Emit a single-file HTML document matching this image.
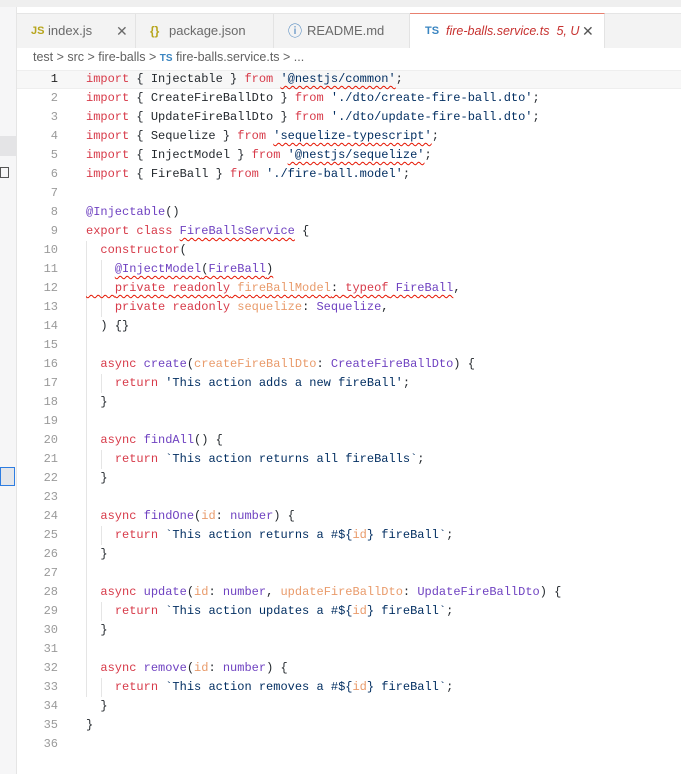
<!DOCTYPE html>
<html><head><meta charset="utf-8"><style>
body{margin:0;width:681px;height:774px;overflow:hidden;background:#fff;font-family:"Liberation Sans",sans-serif;position:relative}
.top{position:absolute;left:0;top:0;width:681px;height:7px;background:#efefef}
.tabbar{position:absolute;left:17px;top:13px;width:664px;height:34px;background:#f3f3f3;border-top:1px solid #e5e5e5}
.tab{position:absolute;top:0;height:34px;background:#f3f3f3;border-right:1px solid #e3e3e3;font-size:13px;color:#6a6a6a;line-height:34px}
.tab.active{background:#fff;border-top:1px solid #e8806f;height:34px;top:-1px}
.side{position:absolute;left:0;top:7px;width:16px;height:767px;background:#f6f6f7;border-right:1px solid #e5e5e5}
.crumb{position:absolute;left:33px;top:50px;font-size:12.5px;color:#616161}
.code{position:absolute;left:0;top:70px;width:681px;font-family:"Liberation Mono",monospace;font-size:12px}
.ln{height:19px;line-height:19px;white-space:pre;position:relative}
.n{position:absolute;left:20px;width:38px;text-align:right;color:#9a9a9a}
.c{position:absolute;left:86px;color:#24292e}
.k{color:#d73a49}.f{color:#6f42c1}.s{color:#032f62}.p{color:#e99b6b}.t{color:#6f42c1}
.sq{text-decoration:underline wavy #e51400;text-decoration-thickness:1px;text-underline-offset:3px}
.g{position:absolute;width:1px;background:#e5e5e5}
</style></head><body>
<div class="top"></div>
<div class="side">
<div style="position:absolute;top:129px;left:0;width:16px;height:20px;background:#e4e4e6"></div>
<div style="position:absolute;top:160px;left:0;width:7px;height:9px;border:1px solid #555;font-size:0"></div>
<div style="position:absolute;top:460px;left:0;width:15px;height:19px;background:#e4e6ea;border:1px solid #2e7de1;box-sizing:border-box"></div>
</div>
<div class="tabbar">
<div class="tab" style="left:0;width:118px"><span style="position:absolute;left:14px;color:#b7a51c;font-size:11px;font-weight:bold">JS</span><span style="position:absolute;left:31px">index.js</span><span style="position:absolute;left:99px;font-size:14px">✕</span></div>
<div class="tab" style="left:119px;width:137px"><span style="position:absolute;left:14px;color:#b7a51c;font-size:12px;font-weight:bold">{}</span><span style="position:absolute;left:33px">package.json</span></div>
<div class="tab" style="left:257px;width:135px"><span style="position:absolute;left:14px;color:#3b7ab8;font-size:14px">ⓘ</span><span style="position:absolute;left:33px">README.md</span></div>
<div class="tab active" style="left:393px;width:194px"><span style="position:absolute;left:15px;color:#3a85c1;font-size:11px;font-weight:bold">TS</span><span style="position:absolute;left:36px;color:#c7312f;font-style:italic;font-size:12.5px">fire-balls.service.ts&nbsp; 5, U</span><span style="position:absolute;left:172px;font-size:14px;color:#555">✕</span></div>
</div>
<div class="crumb">test &gt; src &gt; fire-balls &gt; <b style="color:#3a85c1;font-size:10px">TS</b> fire-balls.service.ts &gt; ...</div>
<div style="position:absolute;left:17px;top:70px;width:664px;height:19px;background:#f7f7f7;border-top:1px solid #eee;border-bottom:1px solid #eee;box-sizing:border-box"></div>
<div class="g" style="left:86px;top:241px;height:456px"></div>
<div class="g" style="left:101px;top:260px;height:57px"></div>
<div class="g" style="left:101px;top:374px;height:19px"></div>
<div class="g" style="left:101px;top:450px;height:19px"></div>
<div class="g" style="left:101px;top:526px;height:19px"></div>
<div class="g" style="left:101px;top:602px;height:19px"></div>
<div class="g" style="left:101px;top:678px;height:19px"></div>
<div class="code">
<div class="ln"><span class="n" style="color:#222">1</span><span class="c"><span class="k">import</span> { Injectable } <span class="k">from</span> <span class="s sq">'@nestjs/common'</span>;</span></div>
<div class="ln"><span class="n">2</span><span class="c"><span class="k">import</span> { CreateFireBallDto } <span class="k">from</span> <span class="s">'./dto/create-fire-ball.dto'</span>;</span></div>
<div class="ln"><span class="n">3</span><span class="c"><span class="k">import</span> { UpdateFireBallDto } <span class="k">from</span> <span class="s">'./dto/update-fire-ball.dto'</span>;</span></div>
<div class="ln"><span class="n">4</span><span class="c"><span class="k">import</span> { Sequelize } <span class="k">from</span> <span class="s sq">'sequelize-typescript'</span>;</span></div>
<div class="ln"><span class="n">5</span><span class="c"><span class="k">import</span> { InjectModel } <span class="k">from</span> <span class="s sq">'@nestjs/sequelize'</span>;</span></div>
<div class="ln"><span class="n">6</span><span class="c"><span class="k">import</span> { FireBall } <span class="k">from</span> <span class="s">'./fire-ball.model'</span>;</span></div>
<div class="ln"><span class="n">7</span></div>
<div class="ln"><span class="n">8</span><span class="c"><span class="f">@Injectable</span>()</span></div>
<div class="ln"><span class="n">9</span><span class="c"><span class="k">export</span> <span class="k">class</span> <span class="t sq">FireBallsService</span> {</span></div>
<div class="ln"><span class="n">10</span><span class="c">  <span class="k">constructor</span>(</span></div>
<div class="ln"><span class="n">11</span><span class="c">    <span class="sq"><span class="f">@InjectModel</span>(<span class="t">FireBall</span>)</span></span></div>
<div class="ln"><span class="n">12</span><span class="c"><span class="sq">    <span class="k">private</span> <span class="k">readonly</span> <span class="p">fireBallModel</span>: <span class="k">typeof</span> <span class="t">FireBall</span></span>,</span></div>
<div class="ln"><span class="n">13</span><span class="c">    <span class="k">private</span> <span class="k">readonly</span> <span class="p">sequelize</span>: <span class="t">Sequelize</span>,</span></div>
<div class="ln"><span class="n">14</span><span class="c">  ) {}</span></div>
<div class="ln"><span class="n">15</span></div>
<div class="ln"><span class="n">16</span><span class="c">  <span class="k">async</span> <span class="f">create</span>(<span class="p">createFireBallDto</span>: <span class="t">CreateFireBallDto</span>) {</span></div>
<div class="ln"><span class="n">17</span><span class="c">    <span class="k">return</span> <span class="s">'This action adds a new fireBall'</span>;</span></div>
<div class="ln"><span class="n">18</span><span class="c">  }</span></div>
<div class="ln"><span class="n">19</span></div>
<div class="ln"><span class="n">20</span><span class="c">  <span class="k">async</span> <span class="f">findAll</span>() {</span></div>
<div class="ln"><span class="n">21</span><span class="c">    <span class="k">return</span> <span class="s">`This action returns all fireBalls`</span>;</span></div>
<div class="ln"><span class="n">22</span><span class="c">  }</span></div>
<div class="ln"><span class="n">23</span></div>
<div class="ln"><span class="n">24</span><span class="c">  <span class="k">async</span> <span class="f">findOne</span>(<span class="p">id</span>: <span class="t">number</span>) {</span></div>
<div class="ln"><span class="n">25</span><span class="c">    <span class="k">return</span> <span class="s">`This action returns a #${</span><span class="p">id</span><span class="s">} fireBall`</span>;</span></div>
<div class="ln"><span class="n">26</span><span class="c">  }</span></div>
<div class="ln"><span class="n">27</span></div>
<div class="ln"><span class="n">28</span><span class="c">  <span class="k">async</span> <span class="f">update</span>(<span class="p">id</span>: <span class="t">number</span>, <span class="p">updateFireBallDto</span>: <span class="t">UpdateFireBallDto</span>) {</span></div>
<div class="ln"><span class="n">29</span><span class="c">    <span class="k">return</span> <span class="s">`This action updates a #${</span><span class="p">id</span><span class="s">} fireBall`</span>;</span></div>
<div class="ln"><span class="n">30</span><span class="c">  }</span></div>
<div class="ln"><span class="n">31</span></div>
<div class="ln"><span class="n">32</span><span class="c">  <span class="k">async</span> <span class="f">remove</span>(<span class="p">id</span>: <span class="t">number</span>) {</span></div>
<div class="ln"><span class="n">33</span><span class="c">    <span class="k">return</span> <span class="s">`This action removes a #${</span><span class="p">id</span><span class="s">} fireBall`</span>;</span></div>
<div class="ln"><span class="n">34</span><span class="c">  }</span></div>
<div class="ln"><span class="n">35</span><span class="c">}</span></div>
<div class="ln"><span class="n">36</span></div>
</div>
</body></html>
